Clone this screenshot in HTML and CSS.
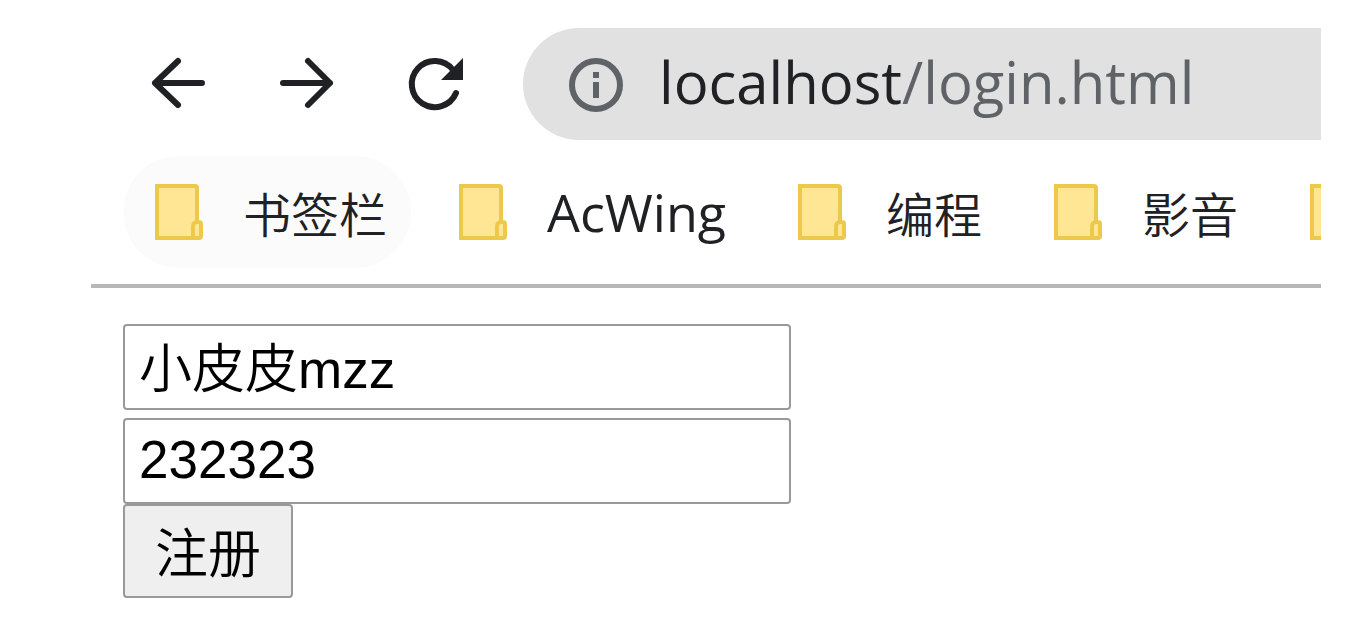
FILE: index.html
```
<!DOCTYPE html>
<html lang="zh-CN">
<head>
  <meta charset="UTF-8">
  <meta name="viewport" content="width=device-width, initial-scale=1.0">
  <title>login</title>
  <link rel="stylesheet" href="styles.css">
</head>
<body>
  <div class="browser">
    <!-- Toolbar -->
    <div class="toolbar">
      <button class="nav-btn" type="button" aria-label="后退">
        <svg viewBox="0 0 64 64"><path d="M55 31H8M31 9L8 31l23 22"/></svg>
      </button>
      <button class="nav-btn" type="button" aria-label="前进">
        <svg viewBox="0 0 64 64"><path d="M8 31h47M33 9l22 22-22 22"/></svg>
      </button>
      <button class="nav-btn" type="button" aria-label="刷新">
        <svg viewBox="0 0 64 64">
          <path d="M53 41A23 23 0 1 1 50 18"/>
          <path class="solid" d="M60 6v22H38z"/>
        </svg>
      </button>
      <div class="address">
        <svg class="info" viewBox="0 0 64 64">
          <circle cx="33" cy="33" r="24"/>
          <path d="M33 30v16M33 20v6"/>
        </svg>
        <a href="login.html" class="url">localhost<span class="path">/login.html</span></a>
      </div>
    </div>

    <!-- Bookmarks -->
    <div class="bookmarks">
      <a href="#" class="bookmark active">
        <svg class="folder" viewBox="0 0 48 56"><path d="M2 2h38a2 2 0 0 1 2 2v34h2a2 2 0 0 1 2 2v12a2 2 0 0 1-2 2H2z"/><path d="M38 54V42a4 4 0 0 1 4-4"/></svg>
        <span>书签栏</span>
      </a>
      <a href="#" class="bookmark">
        <svg class="folder" viewBox="0 0 48 56"><path d="M2 2h38a2 2 0 0 1 2 2v34h2a2 2 0 0 1 2 2v12a2 2 0 0 1-2 2H2z"/><path d="M38 54V42a4 4 0 0 1 4-4"/></svg>
        <span class="latin">AcWing</span>
      </a>
      <a href="#" class="bookmark">
        <svg class="folder" viewBox="0 0 48 56"><path d="M2 2h38a2 2 0 0 1 2 2v34h2a2 2 0 0 1 2 2v12a2 2 0 0 1-2 2H2z"/><path d="M38 54V42a4 4 0 0 1 4-4"/></svg>
        <span>编程</span>
      </a>
      <a href="#" class="bookmark">
        <svg class="folder" viewBox="0 0 48 56"><path d="M2 2h38a2 2 0 0 1 2 2v34h2a2 2 0 0 1 2 2v12a2 2 0 0 1-2 2H2z"/><path d="M38 54V42a4 4 0 0 1 4-4"/></svg>
        <span>影音</span>
      </a>
      <a href="#" class="bookmark" aria-label="文件夹">
        <svg class="folder" viewBox="0 0 48 56"><path d="M2 2h38a2 2 0 0 1 2 2v34h2a2 2 0 0 1 2 2v12a2 2 0 0 1-2 2H2z"/><path d="M38 54V42a4 4 0 0 1 4-4"/></svg>
      </a>
    </div>

    <!-- Login form -->
    <form class="login-form">
      <input type="text" name="username" aria-label="用户名" value="小皮皮mzz">
      <input type="text" name="password" aria-label="密码" value="232323">
      <button type="submit">注册</button>
    </form>
  </div>
</body>
</html>
```
FILE: styles.css
```
* {
  box-sizing: border-box;
}

body {
  margin: 0;
  background-color: #fff;
}

.browser {
  margin: 28px 47px 0 91px;
  overflow: hidden;
  font-family: "Open Sans", "Noto Sans CJK SC", sans-serif;
}

/* Toolbar */
.toolbar {
  display: flex;
  align-items: center;
  gap: 64px;
  padding-left: 56px;
}

.nav-btn {
  flex: none;
  width: 64px;
  height: 64px;
  padding: 0;
  border: none;
  background: none;
  cursor: pointer;
}

.nav-btn svg {
  display: block;
  fill: none;
  stroke: #202124;
  stroke-width: 6;
  stroke-linecap: round;
  stroke-linejoin: round;
}

.nav-btn .solid {
  fill: #202124;
  stroke: none;
}

.address {
  flex: 1;
  display: flex;
  align-items: center;
  gap: 32px;
  height: 112px;
  margin-left: -8px;
  padding-left: 40px;
  background-color: #e1e1e1;
  border-radius: 56px 0 0 56px;
}

.info {
  flex: none;
  width: 64px;
  height: 64px;
  fill: none;
  stroke: #5f6368;
  stroke-width: 6;
}

.url {
  padding-bottom: 4px;
  color: #202124;
  font-size: 58px;
  line-height: 64px;
  text-decoration: none;
  white-space: nowrap;
}

.url .path {
  color: #5f6368;
}

/* Bookmarks */
.bookmarks {
  display: flex;
  gap: 16px;
  padding: 16px 0 16px 32px;
  border-bottom: 4px solid #b8b8b8;
}

.bookmark {
  flex: none;
  display: flex;
  align-items: center;
  gap: 40px;
  height: 112px;
  padding: 0 24px 0 32px;
  border-radius: 56px;
  color: #202124;
  font-size: 48px;
  line-height: 64px;
  text-decoration: none;
  white-space: nowrap;
}

.bookmark.active {
  background-color: #fbfbfb;
}

.bookmark span {
  padding-top: 6px;
  font-weight: 350;
}

.bookmark .latin {
  padding-top: 0;
  font-size: 52px;
  font-weight: 400;
}

.folder {
  flex: none;
  width: 48px;
  height: 56px;
  fill: #ffe694;
  stroke: #ecc94b;
  stroke-width: 4;
}

/* Login form */
.login-form {
  display: flex;
  flex-direction: column;
  align-items: flex-start;
  padding: 36px 32px 24px;
}

.login-form input,
.login-form button {
  border: 2px solid #999;
  border-radius: 4px;
  color: #000;
  font-family: "Liberation Sans", "Noto Sans CJK SC", sans-serif;
  font-size: 53px;
  font-weight: 350;
  line-height: 64px;
}

.login-form input {
  width: 668px;
  max-width: 100%;
  height: 86px;
  padding: 0 14px 4px;
  background-color: #fff;
}

.login-form input + input {
  margin-top: 8px;
}

.login-form button {
  height: 94px;
  padding: 8px 30px 0;
  background-color: #efefef;
  cursor: pointer;
}
```
